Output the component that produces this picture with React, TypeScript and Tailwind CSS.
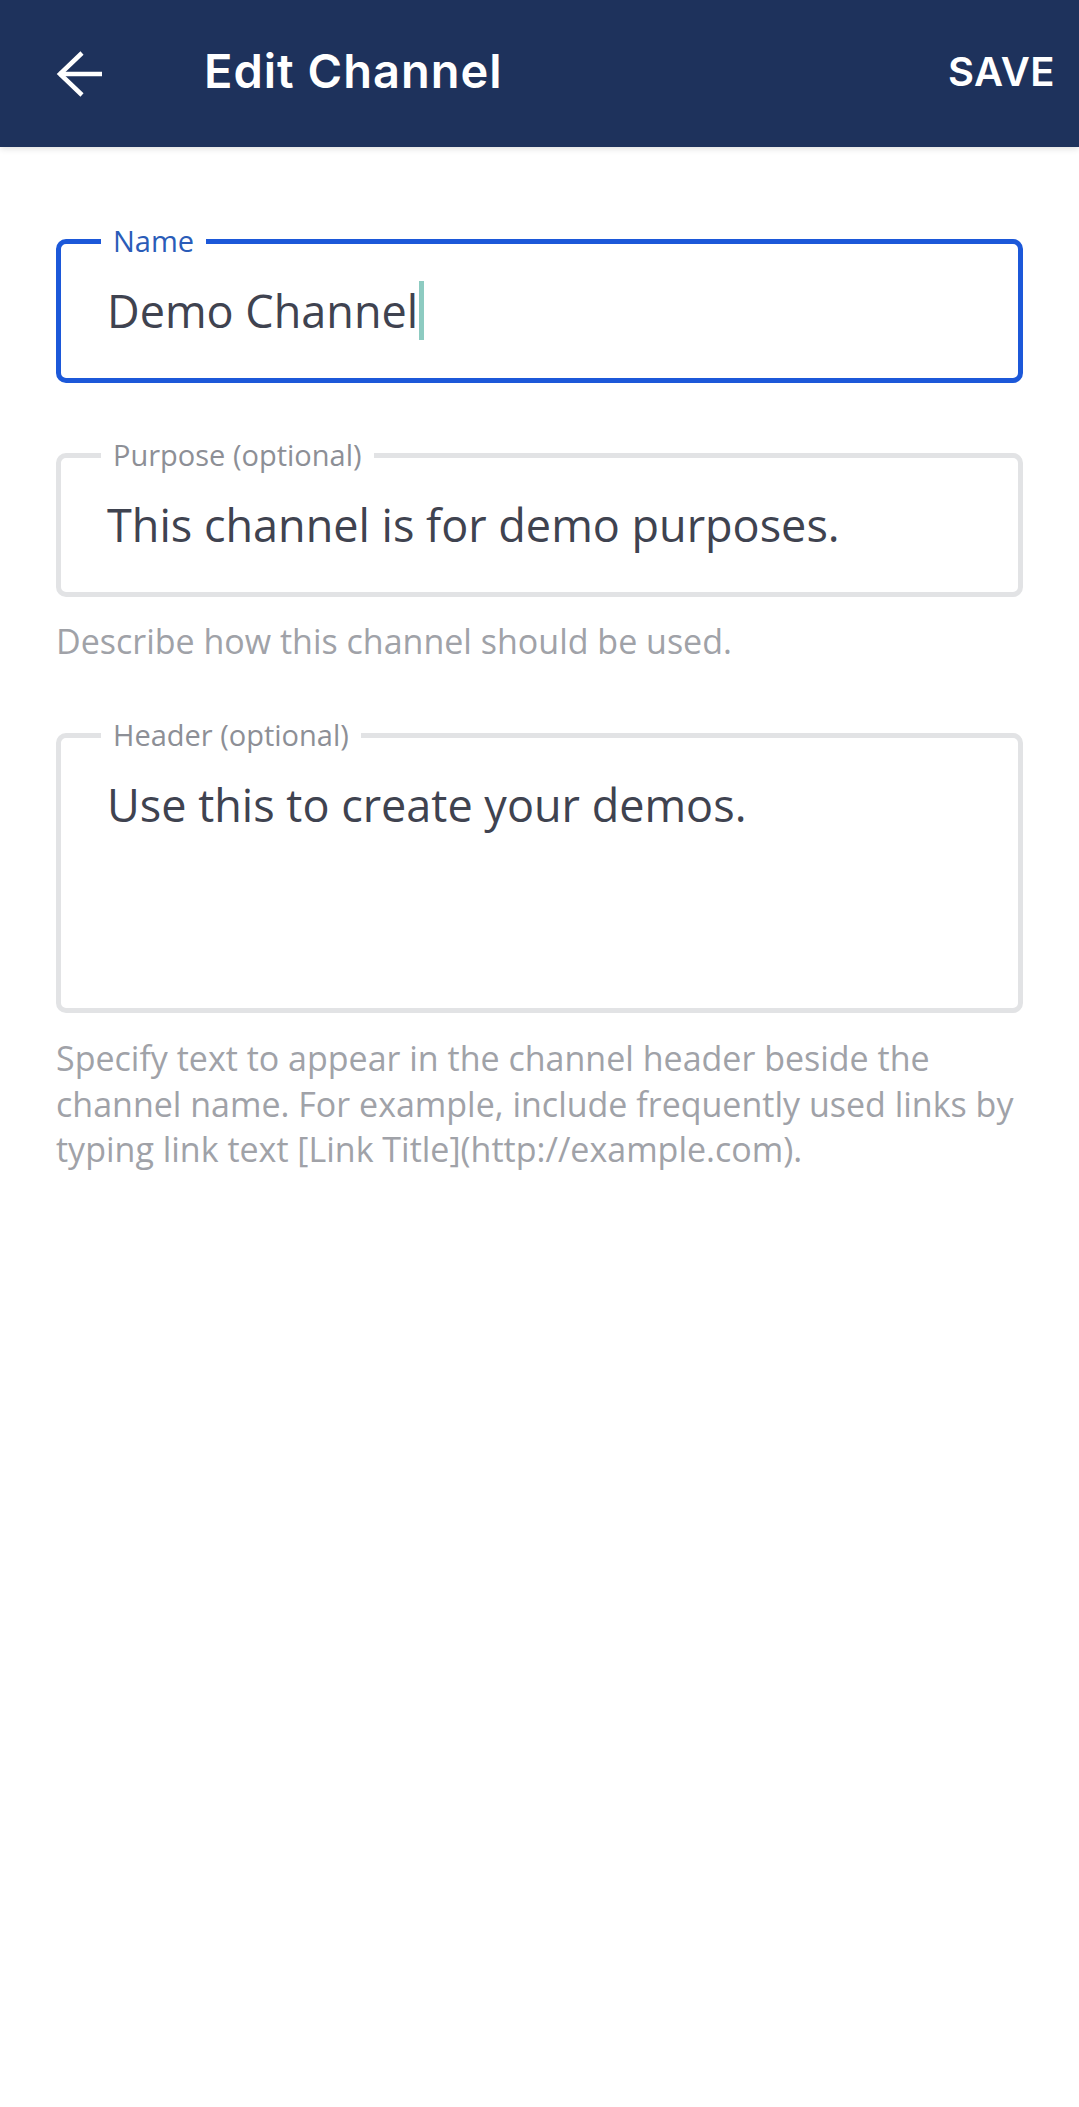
const FONT = { fontFamily: '"Open Sans", "Noto Sans", sans-serif' };

function BackArrow() {
  return (
    <svg width="48" height="48" viewBox="0 0 48 48" fill="none" className="block">
      <path d="M3 24 H46" stroke="white" strokeWidth="4.5" />
      <path d="M26 3 L4 24 L26 45" stroke="white" strokeWidth="4.5" strokeLinejoin="miter" />
    </svg>
  );
}

function Field({
  label,
  value,
  focused,
  tall,
}: {
  label: string;
  value: string;
  focused?: boolean;
  tall?: boolean;
}) {
  return (
    <div
      className={`relative rounded-[10px] border-[5px] pl-[46px] pr-[30px] pt-[36px] ${
        focused ? 'border-[#1c58d9]' : 'border-[#e2e3e5]'
      } ${tall ? 'h-[280px]' : 'h-[144px]'}`}
    >
      <span
        className={`absolute left-[40px] top-[-21px] bg-white px-[12px] text-[29px] leading-[36px] ${
          focused ? 'text-[#2a5cb8]' : 'text-[#8d8f96]'
        }`}
      >
        {label}
      </span>
      <div className="flex items-center text-[45px] leading-[61px] text-[#3f4350]">
        <span>{value}</span>
        {focused && <span className="ml-[1px] inline-block h-[59px] w-[5px] bg-[#8dcbc1]"></span>}
      </div>
    </div>
  );
}

export default function App() {
  return (
    <div className="min-h-[2107px] w-full bg-white" style={FONT}>
      <div className="relative z-10 flex h-[147px] items-center bg-[#1e325c] pb-[4px] pl-[56px] pr-[24px] shadow-[0_2px_6px_rgba(0,0,0,0.12)]">
        <div className="pt-[4px]">
          <BackArrow />
        </div>
        <div
          className="ml-[100px] flex-1 text-[47px] font-semibold tracking-[1px] text-white"
          style={{ fontFamily: 'Inter, "Open Sans", sans-serif' }}
        >
          Edit Channel
        </div>
        <div
          className="text-[40px] font-semibold tracking-[0.5px] text-white"
          style={{ fontFamily: 'Inter, "Open Sans", sans-serif' }}
        >
          SAVE
        </div>
      </div>

      <div className="px-[56px] pt-[92px]">
        <Field label="Name" value="Demo Channel" focused />

        <div className="mt-[70px]">
          <Field label="Purpose (optional)" value="This channel is for demo purposes." />
        </div>
        <p className="mt-[22px] text-[34px] leading-[45px] text-[#a0a2a8]">
          Describe how this channel should be used.
        </p>

        <div className="mt-[69px]">
          <Field label="Header (optional)" value="Use this to create your demos." tall />
        </div>
        <p className="mt-[23px] text-[34px] leading-[45.5px] text-[#a0a2a8]">
          Specify text to appear in the channel header beside the channel name. For example, include frequently used
          links by typing link text [Link Title](http://example.com).
        </p>
      </div>
    </div>
  );
}
